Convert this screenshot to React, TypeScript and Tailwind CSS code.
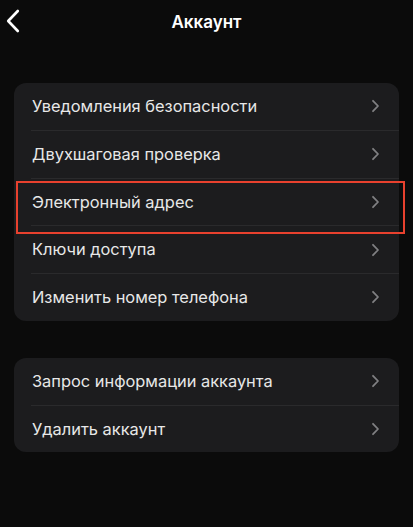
import React from "react";

const ChevronRight = () => (
  <svg width="9" height="14" viewBox="0 0 9 14" fill="none" className="shrink-0">
    <path d="M2 1.8L7 7L2 12.2" stroke="#808083" strokeWidth="1.8" strokeLinecap="round" strokeLinejoin="round" />
  </svg>
);

const BackChevron = () => (
  <svg width="14" height="24" viewBox="0 0 14 24" fill="none">
    <path d="M11.8 2L2.2 12L11.8 22" stroke="#ffffff" strokeWidth="2.6" strokeLinecap="round" strokeLinejoin="round" />
  </svg>
);

type Row = { label: string; highlight?: boolean };

const Group = ({ rows }: { rows: Row[] }) => (
  <div className="mx-[14px] rounded-[12px] bg-[#1c1c1e]">
    {rows.map((r, i) => (
      <div key={r.label} className="relative">
        <div className="flex h-[46.75px] items-center pl-[18px] pr-[19px]">
          <span className="flex-1 text-[16.4px] text-[#e8e8e8]">{r.label}</span>
          <ChevronRight />
        </div>
        {i < rows.length - 1 && <div className="ml-[17px] h-px bg-[#2a2a2c]" />}
        {r.highlight && (
          <div className="pointer-events-none absolute left-[2px] right-[-6px] top-[2.5px] bottom-[-8px] border-2 border-[#e8412e]" />
        )}
      </div>
    ))}
  </div>
);

export default function App() {
  return (
    <div className="h-[527px] w-[413px] overflow-hidden bg-[#0b0b0b]" style={{ fontFamily: "Inter, 'Noto Sans', sans-serif" }}>
      <div className="relative flex h-[42px] items-center justify-center pt-[3px]">
        <div className="absolute left-[6px] top-[9px]">
          <BackChevron />
        </div>
        <span className="text-[17px] font-semibold text-white">Аккаунт</span>
      </div>
      <div className="h-[41px]" />
      <Group
        rows={[
          { label: "Уведомления безопасности" },
          { label: "Двухшаговая проверка" },
          { label: "Электронный адрес", highlight: true },
          { label: "Ключи доступа" },
          { label: "Изменить номер телефона" },
        ]}
      />
      <div className="h-[37px]" />
      <Group rows={[{ label: "Запрос информации аккаунта" }, { label: "Удалить аккаунт" }]} />
    </div>
  );
}
